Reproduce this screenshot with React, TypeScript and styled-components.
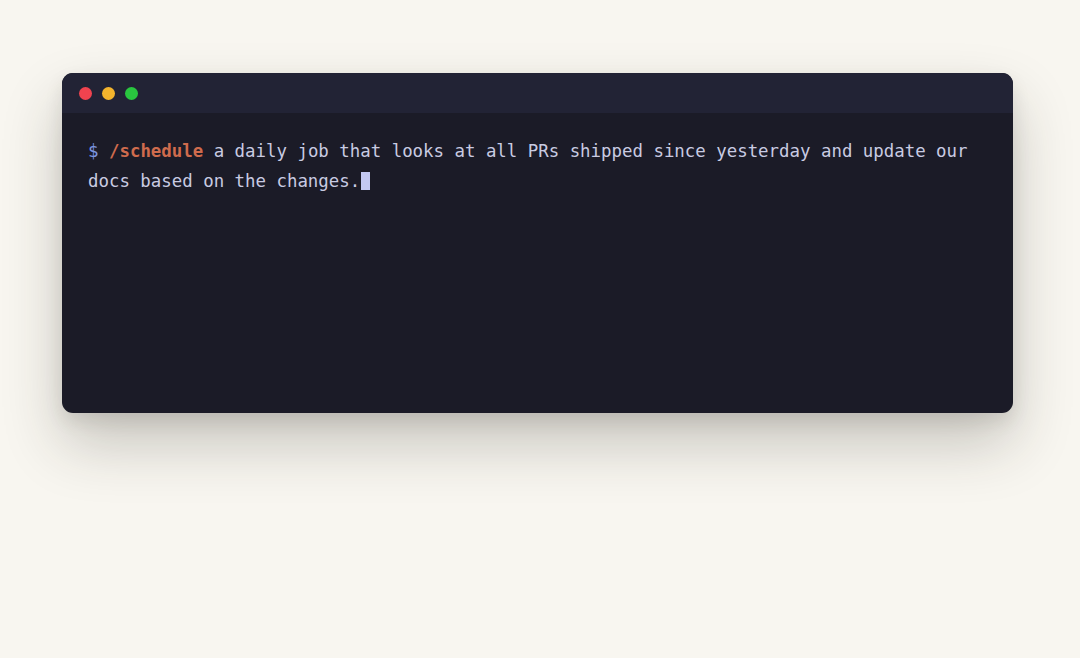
import React from "react";
import styled, { createGlobalStyle } from "styled-components";

const Global = createGlobalStyle`
  html, body { margin: 0; padding: 0; background: #f8f6f0; }
  body { font-family: "DejaVu Sans Mono", monospace; }
`;

const Page = styled.div`
  min-height: 658px;
  padding: 73px 0 0 62px;
  box-sizing: border-box;
`;

const Window = styled.div`
  width: 951px;
  height: 340px;
  border-radius: 11px;
  background: #1b1b27;
  overflow: hidden;
  display: flex;
  flex-direction: column;
  box-shadow: 0 30px 60px rgba(40, 38, 30, 0.24), 0 8px 18px rgba(40, 38, 30, 0.1);
`;

const TitleBar = styled.div`
  height: 40px;
  background: #222335;
  display: flex;
  align-items: center;
  gap: 10px;
  padding-left: 17px;
`;

const Light = styled.span<{ $c: string }>`
  width: 13px;
  height: 13px;
  border-radius: 50%;
  background: ${(p) => p.$c};
`;

const Body = styled.div`
  padding: 24px 26px;
  font-family: "DejaVu Sans Mono", monospace;
  font-size: 17.4px;
  line-height: 29.5px;
  color: #c9cbe2;
  white-space: pre-wrap;
`;

const Prompt = styled.span`
  color: #7b95e0;
`;

const Command = styled.span`
  color: #cf6b4d;
  font-weight: bold;
`;

const Cursor = styled.span`
  display: inline-block;
  width: 9px;
  height: 18px;
  background: #c3c8f2;
  vertical-align: -3px;
  margin-left: 1px;
`;

export default function App() {
  return (
    <>
      <Global />
      <Page>
        <Window>
          <TitleBar>
            <Light $c="#f0434f" />
            <Light $c="#f4b42d" />
            <Light $c="#29c63f" />
          </TitleBar>
          <Body>
            <Prompt>$</Prompt> <Command>/schedule</Command> a daily job that looks at all PRs shipped since yesterday and update our
            {"\n"}docs based on the changes.<Cursor />
          </Body>
        </Window>
      </Page>
    </>
  );
}
